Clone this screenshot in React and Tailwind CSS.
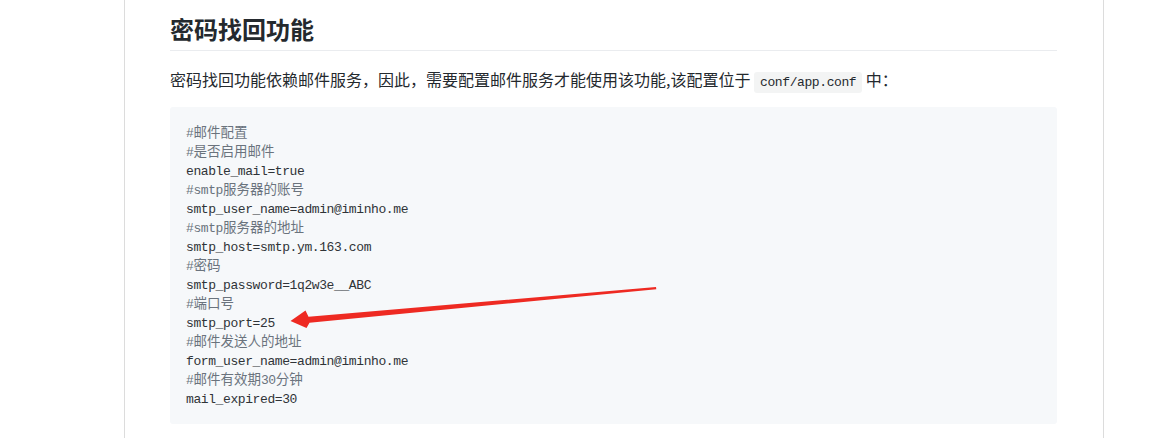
import React from 'react';

const lines = [
    { c: true, t: '#邮件配置' },
    { c: true, t: '#是否启用邮件' },
    { c: false, t: 'enable_mail=true' },
    { c: true, t: '#smtp服务器的账号' },
    { c: false, t: 'smtp_user_name=admin@iminho.me' },
    { c: true, t: '#smtp服务器的地址' },
    { c: false, t: 'smtp_host=smtp.ym.163.com' },
    { c: true, t: '#密码' },
    { c: false, t: 'smtp_password=1q2w3e__ABC' },
    { c: true, t: '#端口号' },
    { c: false, t: 'smtp_port=25' },
    { c: true, t: '#邮件发送人的地址' },
    { c: false, t: 'form_user_name=admin@iminho.me' },
    { c: true, t: '#邮件有效期30分钟' },
    { c: false, t: 'mail_expired=30' },
];

// split a line into ascii / cjk runs so each gets its own size
function runs(text) {
    return text.match(/[\x00-\x7f]+|[^\x00-\x7f]+/g) || [];
}

function CodeLine({ line }) {
    return (
        <div className={`h-[19px] overflow-visible text-[13px] leading-[19px] ${line.c ? 'text-[#6a737d]' : 'text-[#2f3337]'}`}>
            {runs(line.t).map((r, i) =>
                /^[\x00-\x7f]/.test(r) ? (
                    <span key={i} className="text-[13px] leading-[19px] tracking-[-0.4px]">{r}</span>
                ) : (
                    <span key={i} className="text-[13.5px] leading-[19px]">{r}</span>
                )
            )}
        </div>
    );
}

export default function App() {
    return (
        <div className="relative h-[438px] overflow-hidden bg-white" style={{ fontFamily: '"Noto Sans CJK SC", "Noto Sans", sans-serif' }}>
            <div className="ml-[124px] h-full w-[980px] border-x border-[#dcdcdc] pl-[45px] pr-[46px]">
                <h2 className="border-b border-[#eaecef] pt-[14px] pb-[6px] text-[24px] font-bold leading-[30px] text-[#24292e]">
                    密码找回功能
                </h2>
                <p className="mt-4 h-[24px] text-[16px] leading-[24px] text-[#24292e]">
                    密码找回功能依赖邮件服务，因此，需要配置邮件服务才能使用该功能,该配置位于{' '}
                    <code className="rounded-[3px] bg-[#f3f4f4] px-[6px] py-[3px] font-['Liberation_Mono',monospace] text-[13px] leading-[15px] tracking-[-0.4px]">conf/app.conf</code>
                    {' '}中：
                </p>
                <pre className="mt-4 rounded-[3px] bg-[#f6f8fa] px-4 pt-[17px] pb-[15px] font-['Liberation_Mono','Noto_Sans_CJK_SC',monospace] text-[13px] leading-[19px]">
                    {lines.map((l, i) => (
                        <CodeLine key={i} line={l} />
                    ))}
                </pre>
            </div>

            {/* red annotation arrow */}
            <svg className="pointer-events-none absolute left-0 top-0" width="1156" height="438" viewBox="0 0 1156 438">
                <polygon
                    points="656,287 656.3,289.2 309.5,322.8 306.5,328 290.5,321 305.5,310.5 308.5,316.8"
                    fill="#ee2a22"
                />
            </svg>
        </div>
    );
}
